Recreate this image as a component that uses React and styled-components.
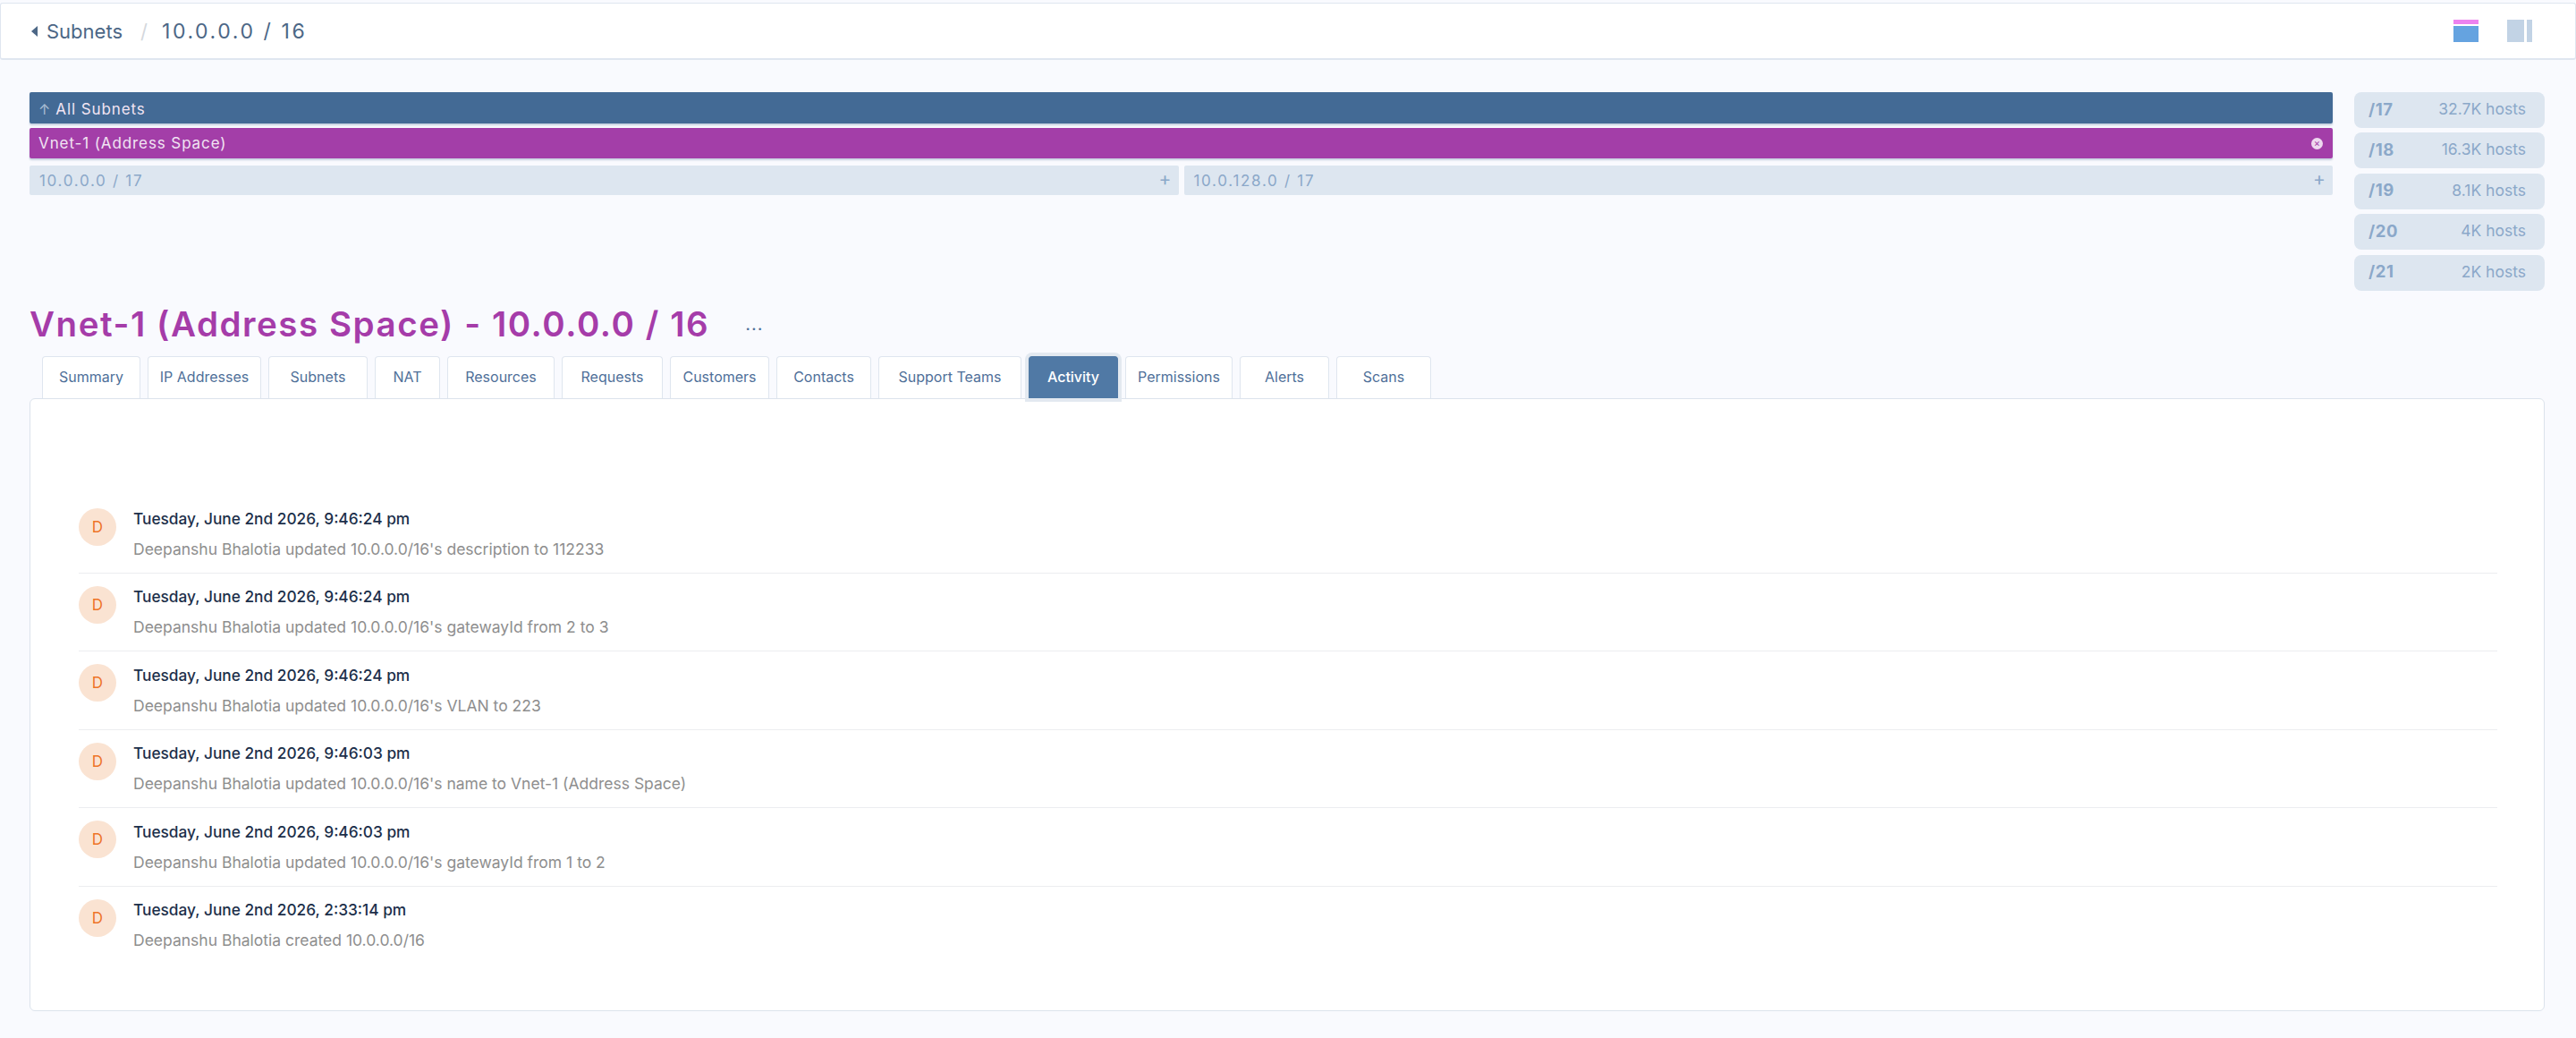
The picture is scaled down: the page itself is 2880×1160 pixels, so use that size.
import React from 'react';
import styled, { createGlobalStyle } from 'styled-components';

const GlobalStyle = createGlobalStyle`
  html, body {
    margin: 0;
    padding: 0;
    background: #f9fafe;
    font-family: Inter, "Noto Sans", sans-serif;
  }
  * {
    box-sizing: border-box;
  }
`;

const Page = styled.div`
  width: 2880px;
  height: 1160px;
  padding-top: 3px;
  overflow: hidden;
  display: flex;
  flex-direction: column;
`;

const Header = styled.header`
  height: 64px;
  flex: none;
  display: flex;
  align-items: center;
  padding: 0 48px 0 34px;
  background: #fff;
  border: 1px solid #dfe6f0;
  border-bottom-width: 2px;
  border-radius: 3px;
`;

const Crumb = styled.span`
  font-size: 22px;
  color: #4c6786;
  margin-left: 10px;
`;

const Divider = styled.span`
  font-size: 22px;
  color: #d4d8dd;
  margin: 0 16px 0 20px;
`;

const CurrentCrumb = styled.span`
  font-size: 23px;
  letter-spacing: 2.6px;
  color: #4c6786;
`;

const LayoutIcons = styled.div`
  margin-left: auto;
  display: flex;
  gap: 32px;
`;

const Main = styled.main`
  flex: 1;
  padding: 36px 35px 30px 33px;
  display: flex;
  flex-direction: column;
`;

const TopGrid = styled.section`
  display: grid;
  grid-template-columns: 1fr 213px;
  gap: 24px;
`;

const Bars = styled.div`
  display: flex;
  flex-direction: column;
`;

const Bar = styled.div`
  height: ${({ $height }) => $height}px;
  margin-bottom: ${({ $gap }) => $gap}px;
  padding: ${({ $nudge }) => $nudge || 0}px 10px 0;
  display: flex;
  align-items: center;
  border-radius: 2px;
  background: ${({ $color }) => $color};
  color: #f1e4f3;
  font-size: 17px;
  letter-spacing: 0.9px;
  box-shadow: 0 2px 2px rgba(85, 115, 155, 0.3);
`;

const ArrowMark = styled.span`
  color: #a9bdd3;
  font-size: 16px;
  margin-right: 6px;
  letter-spacing: 0;
`;

const CloseMark = styled.span`
  margin-left: auto;
  margin-right: 1px;
  width: 13px;
  height: 13px;
  border-radius: 50%;
  background: #eed9ef;
  color: #a33ea8;
  font-size: 11px;
  line-height: 12px;
  letter-spacing: 0;
  text-align: center;
`;

const SplitRow = styled.div`
  display: grid;
  grid-template-columns: 1fr 1fr;
  gap: 6px;
`;

const SplitBlock = styled.div`
  height: 33px;
  display: flex;
  align-items: center;
  justify-content: space-between;
  padding: 0 8px 0 11px;
  border-radius: 2px;
  background: #dde6f0;
  color: #8ba8c9;
  font-size: 17px;
  letter-spacing: 1.7px;
`;

const PlusMark = styled.span`
  font-size: 21px;
  line-height: 21px;
  padding-bottom: 4px;
  letter-spacing: 0;
`;

const Chips = styled.div`
  display: flex;
  flex-direction: column;
  gap: 5.4px;
`;

const Chip = styled.div`
  height: 40px;
  padding: 0 21px 3px 16px;
  display: flex;
  align-items: center;
  justify-content: space-between;
  border-radius: 8px;
  background: #dde6f0;
  color: #8ba8c9;
  font-size: 17.5px;
`;

const ChipMask = styled.strong`
  font-size: 18.5px;
  letter-spacing: 0.6px;
  font-weight: 700;
`;

const TitleRow = styled.div`
  margin: 7.5px 0 5.5px;
  height: 60px;
  display: flex;
  align-items: center;
`;

const Title = styled.h1`
  margin: 0;
  font-size: 38.5px;
  font-weight: 600;
  letter-spacing: 1.55px;
  color: #a53ca9;
`;

const MoreDots = styled.span`
  margin-left: 40px;
  color: #4f7099;
  font-size: 20px;
  letter-spacing: 1px;
`;

const Tabs = styled.nav`
  padding-left: 14px;
  display: flex;
  gap: 8px;
`;

const Tab = styled.div`
  width: ${({ $width }) => $width}px;
  height: 47px;
  padding-bottom: 2px;
  display: flex;
  align-items: center;
  justify-content: center;
  position: relative;
  z-index: ${({ $active }) => ($active ? 1 : 0)};
  font-size: 16px;
  border-radius: 4px 4px 0 0;
  color: ${({ $active }) => ($active ? '#fff' : '#4f7099')};
  font-weight: ${({ $active }) => ($active ? 500 : 400)};
  background: ${({ $active }) => ($active ? '#5079a5' : '#fff')};
  border: 1px solid ${({ $active }) => ($active ? '#5079a5' : '#dfe6ef')};
  border-bottom: none;
  box-shadow: ${({ $active }) => ($active ? '0 0 0 4px #e3e9f0' : 'none')};
`;

const Card = styled.section`
  flex: 1;
  padding: 108px 52px 0 54px;
  background: #fff;
  border: 1px solid #dce3ec;
  border-radius: 6px;
`;

const Row = styled.article`
  height: 87.4px;
  padding-top: 14px;
  display: flex;
  gap: 19px;
  border-bottom: ${({ $last }) => ($last ? 'none' : '1px solid #ecedf0')};
`;

const Avatar = styled.div`
  width: 42px;
  height: 42px;
  flex: none;
  display: flex;
  align-items: center;
  justify-content: center;
  border-radius: 50%;
  background: #fae3d2;
  color: #ee7427;
  font-size: 17px;
`;

const RowText = styled.div`
  padding-top: 1.5px;
  display: flex;
  flex-direction: column;
  gap: 12px;
`;

const RowTime = styled.div`
  font-size: 17.3px;
  line-height: 22px;
  font-weight: 500;
  color: #1c2f4a;
`;

const RowMessage = styled.div`
  font-size: 17.5px;
  line-height: 22px;
  color: #8e8e8e;
`;

const tabs = [
  { label: 'Summary', width: 110 },
  { label: 'IP Addresses', width: 127 },
  { label: 'Subnets', width: 111 },
  { label: 'NAT', width: 73 },
  { label: 'Resources', width: 120 },
  { label: 'Requests', width: 113 },
  { label: 'Customers', width: 111 },
  { label: 'Contacts', width: 106 },
  { label: 'Support Teams', width: 160 },
  { label: 'Activity', width: 100, active: true },
  { label: 'Permissions', width: 120 },
  { label: 'Alerts', width: 100 },
  { label: 'Scans', width: 106 },
];

const chips = [
  ['/17', '32.7K hosts'],
  ['/18', '16.3K hosts'],
  ['/19', '8.1K hosts'],
  ['/20', '4K hosts'],
  ['/21', '2K hosts'],
];

const activity = [
  ['Tuesday, June 2nd 2026, 9:46:24 pm', "Deepanshu Bhalotia updated 10.0.0.0/16's description to 112233"],
  ['Tuesday, June 2nd 2026, 9:46:24 pm', "Deepanshu Bhalotia updated 10.0.0.0/16's gatewayId from 2 to 3"],
  ['Tuesday, June 2nd 2026, 9:46:24 pm', "Deepanshu Bhalotia updated 10.0.0.0/16's VLAN to 223"],
  ['Tuesday, June 2nd 2026, 9:46:03 pm', "Deepanshu Bhalotia updated 10.0.0.0/16's name to Vnet-1 (Address Space)"],
  ['Tuesday, June 2nd 2026, 9:46:03 pm', "Deepanshu Bhalotia updated 10.0.0.0/16's gatewayId from 1 to 2"],
  ['Tuesday, June 2nd 2026, 2:33:14 pm', 'Deepanshu Bhalotia created 10.0.0.0/16'],
];

const BackCaret = () => (
  <svg width="7" height="12" viewBox="0 0 7 12">
    <path d="M7 0 L0 6 L7 12 Z" fill="#4c6786" />
  </svg>
);

const TopLayoutIcon = () => (
  <svg width="28" height="25" viewBox="0 0 28 25">
    <rect x="0" y="0" width="28" height="5" fill="#ec82ef" />
    <rect x="0" y="7" width="28" height="18" fill="#65a3e0" />
  </svg>
);

const SideLayoutIcon = () => (
  <svg width="28" height="25" viewBox="0 0 28 25">
    <rect x="0" y="0" width="19" height="25" fill="#c2d3e5" />
    <rect x="22" y="0" width="6" height="25" fill="#c2d3e5" />
  </svg>
);

export default function App() {
  return (
    <Page>
      <GlobalStyle />
      <Header>
        <BackCaret />
        <Crumb>Subnets</Crumb>
        <Divider>/</Divider>
        <CurrentCrumb>10.0.0.0 / 16</CurrentCrumb>
        <LayoutIcons>
          <TopLayoutIcon />
          <SideLayoutIcon />
        </LayoutIcons>
      </Header>
      <Main>
        <TopGrid>
          <Bars>
            <Bar $height={35} $gap={5} $nudge={3} $color="#436a95">
              <ArrowMark>↑</ArrowMark>All Subnets
            </Bar>
            <Bar $height={34} $gap={8} $color="#a33ea8">
              Vnet-1 (Address Space)
              <CloseMark>×</CloseMark>
            </Bar>
            <SplitRow>
              <SplitBlock>
                10.0.0.0 / 17<PlusMark>+</PlusMark>
              </SplitBlock>
              <SplitBlock>
                10.0.128.0 / 17<PlusMark>+</PlusMark>
              </SplitBlock>
            </SplitRow>
          </Bars>
          <Chips>
            {chips.map(([mask, hosts]) => (
              <Chip key={mask}>
                <ChipMask>{mask}</ChipMask>
                {hosts}
              </Chip>
            ))}
          </Chips>
        </TopGrid>
        <TitleRow>
          <Title>Vnet-1 (Address Space) - 10.0.0.0 / 16</Title>
          <MoreDots>...</MoreDots>
        </TitleRow>
        <Tabs>
          {tabs.map((tab) => (
            <Tab key={tab.label} $width={tab.width} $active={tab.active}>
              {tab.label}
            </Tab>
          ))}
        </Tabs>
        <Card>
          {activity.map(([time, message], index) => (
            <Row key={index} $last={index === activity.length - 1}>
              <Avatar>D</Avatar>
              <RowText>
                <RowTime>{time}</RowTime>
                <RowMessage>{message}</RowMessage>
              </RowText>
            </Row>
          ))}
        </Card>
      </Main>
    </Page>
  );
}
